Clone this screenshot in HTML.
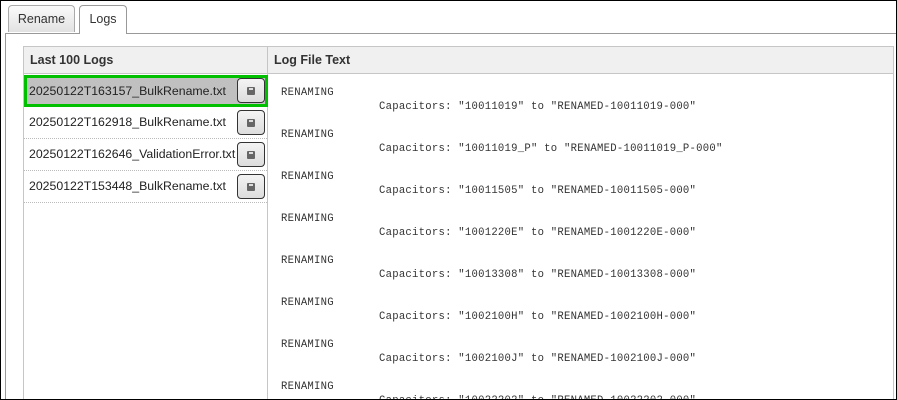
<!DOCTYPE html><html><head><style>
body{margin:0;width:897px;height:400px;overflow:hidden;background:#fff;font-family:"Liberation Sans",sans-serif;}
.outer{position:absolute;left:0;top:0;width:895px;height:398px;border:1px solid #000;overflow:hidden}
.tab{position:absolute;top:4px;height:27px;border:1px solid #aaa;border-bottom:none;border-radius:4px 4px 0 0;font-size:12.5px;color:#333;text-align:center;line-height:27px;box-sizing:border-box}
.panel{position:absolute;left:4px;top:32px;width:893px;height:380px;border:1px solid #999;background:#fff}
.grid{position:absolute;left:22px;top:45px;width:871px;height:360px;border:1px solid #c6c6c6;box-sizing:border-box}
.hd{position:absolute;top:0;height:27px;background:#f0f0f0;border-bottom:1px solid #c6c6c6;font-size:12.5px;font-weight:bold;color:#333;line-height:27px;box-sizing:border-box}
.row{position:absolute;left:0;width:243px;height:32px;border-bottom:1px dotted #bbb;font-size:12.3px;color:#222;line-height:31px;padding-left:5px;box-sizing:border-box;white-space:nowrap}
.btn{position:absolute;right:2px;top:3px;width:28px;height:25px;border:1px solid #333;border-radius:4px;background:linear-gradient(#f4f4f4,#ddd);box-sizing:border-box}
.btn i{position:absolute;left:9px;top:8px;width:8px;height:8px;background:#666;border-radius:1px}
.btn i:after{content:"";position:absolute;left:2px;top:1px;width:4px;height:2px;background:#ddd}
.txt{position:absolute;left:280px;top:85px;font-family:"Liberation Mono",monospace;font-size:10.6px;letter-spacing:0.25px;color:#333;white-space:pre;line-height:14px}
.txt b{font-weight:normal;display:block;height:28px}
.txt s{text-decoration:none;display:block;margin-left:98px}
</style></head><body><div class="outer">
<div class="panel"></div>
<div class="tab" style="left:7px;width:67px;background:linear-gradient(#fafafa,#e2e2e2)">Rename</div>
<div class="tab" style="left:78px;width:48px;height:29px;background:#fff;border-color:#999">Logs</div>
<div class="grid">
<div class="hd" style="left:0;width:244px;padding-left:6px;border-right:1px solid #c6c6c6">Last 100 Logs</div>
<div class="hd" style="left:244px;width:625px;padding-left:6px">Log File Text</div>
<div style="position:absolute;left:243px;top:27px;width:1px;height:340px;background:#c6c6c6"></div>
<div class="row" style="top:28px;background:#c0c0c0;border:3px solid #00c000;padding-left:2px;line-height:26px;height:32px;width:244px">20250122T163157_BulkRename.txt<div class="btn" style="top:0;right:0"><i></i></div></div>
<div class="row" style="top:60px">20250122T162918_BulkRename.txt<div class="btn"><i></i></div></div>
<div class="row" style="top:92px">20250122T162646_ValidationError.txt<div class="btn"><i></i></div></div>
<div class="row" style="top:124px">20250122T153448_BulkRename.txt<div class="btn"><i></i></div></div>
</div>
<div class="txt"><b>RENAMING<s>Capacitors: "10011019" to "RENAMED-10011019-000"</s></b><br><b>RENAMING<s>Capacitors: "10011019_P" to "RENAMED-10011019_P-000"</s></b><br><b>RENAMING<s>Capacitors: "10011505" to "RENAMED-10011505-000"</s></b><br><b>RENAMING<s>Capacitors: "1001220E" to "RENAMED-1001220E-000"</s></b><br><b>RENAMING<s>Capacitors: "10013308" to "RENAMED-10013308-000"</s></b><br><b>RENAMING<s>Capacitors: "1002100H" to "RENAMED-1002100H-000"</s></b><br><b>RENAMING<s>Capacitors: "1002100J" to "RENAMED-1002100J-000"</s></b><br><b>RENAMING<s>Capacitors: "10022202" to "RENAMED-10022202-000"</s></b></div>
</div></body></html>
